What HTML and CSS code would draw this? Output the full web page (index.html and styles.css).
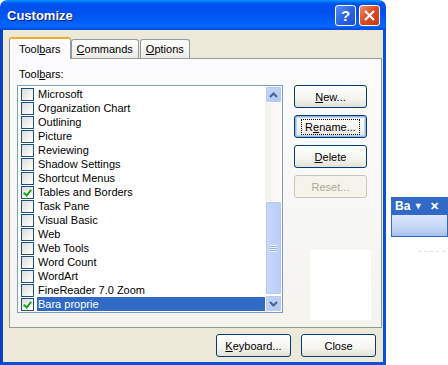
FILE: index.html
```html
<!DOCTYPE html>
<html lang="en">
<head>
    <meta charset="UTF-8">
    <link rel="stylesheet" href="styles.css">
    <title>Customize</title>
</head>
<body>

    <div class="window">
        <div class="titlebar">
            <span class="title">Customize</span>
            <span class="cap-btn help">?</span>
            <span class="cap-btn close">
                <svg width="13" height="13" viewBox="0 0 13 13"><path d="M2 2 L11 11 M11 2 L2 11" stroke="#fff" stroke-width="2.2"/></svg>
            </span>
        </div>

        <div class="client">
            <div class="tabs">
                <div class="tab active">Tool<u>b</u>ars</div>
                <div class="tab"><u>C</u>ommands</div>
                <div class="tab"><u>O</u>ptions</div>
            </div>

            <div class="panel">
                <div class="label">Tool<u>b</u>ars:</div>
                <div class="panel-row">
                    <div class="listbox">
                        <div class="items">
                            <div class="item"><span class="check"></span>Microsoft</div>
                            <div class="item"><span class="check"></span>Organization Chart</div>
                            <div class="item"><span class="check"></span>Outlining</div>
                            <div class="item"><span class="check"></span>Picture</div>
                            <div class="item"><span class="check"></span>Reviewing</div>
                            <div class="item"><span class="check"></span>Shadow Settings</div>
                            <div class="item"><span class="check"></span>Shortcut Menus</div>
                            <div class="item"><span class="check on"></span>Tables and Borders</div>
                            <div class="item"><span class="check"></span>Task Pane</div>
                            <div class="item"><span class="check"></span>Visual Basic</div>
                            <div class="item"><span class="check"></span>Web</div>
                            <div class="item"><span class="check"></span>Web Tools</div>
                            <div class="item"><span class="check"></span>Word Count</div>
                            <div class="item"><span class="check"></span>WordArt</div>
                            <div class="item"><span class="check"></span>FineReader 7.0 Zoom</div>
                            <div class="item selected"><span class="check on"></span><span class="sel-text">Bara proprie</span></div>
                        </div>
                        <div class="scrollbar">
                            <div class="sb-btn">
                                <svg width="9" height="6" viewBox="0 0 9 6"><path d="M1 5 L4.5 1.5 L8 5" fill="none" stroke="#4d6185" stroke-width="2"/></svg>
                            </div>
                            <div class="sb-track"></div>
                            <div class="sb-thumb"><span class="grip"></span></div>
                            <div class="sb-btn">
                                <svg width="9" height="6" viewBox="0 0 9 6"><path d="M1 1 L4.5 4.5 L8 1" fill="none" stroke="#4d6185" stroke-width="2"/></svg>
                            </div>
                        </div>
                    </div>

                    <div class="side-buttons">
                        <button><u>N</u>ew...</button>
                        <button class="default"><span class="focus">R<u>e</u>name...</span></button>
                        <button><u>D</u>elete</button>
                        <button disabled>Reset...</button>
                    </div>
                </div>
                <div class="artifact"></div>
            </div>

            <div class="footer">
                <button><u>K</u>eyboard...</button>
                <button>Close</button>
            </div>
        </div>
    </div>

    <!-- floating toolbar on the desktop -->
    <div class="float-bar">
        <div class="float-title">Ba <span class="arrow">&#9660;</span><span class="x">&#10005;</span></div>
        <div class="float-body"></div>
    </div>
    <div class="dashes"></div>

</body>
</html>
```

FILE: styles.css
```css
body {
    margin: 0;
    background-color: #fff;
    font-family: 'Liberation Sans', Arial, sans-serif;
    font-size: 11px;
    color: #000;
    width: 448px;
    height: 365px;
    overflow: hidden;
    position: relative;
}

u {
    text-decoration: underline;
    text-underline-offset: 1px;
}

.window {
    width: 386px;
    height: 365px;
    display: flex;
    flex-direction: column;
}

.titlebar {
    height: 30px;
    flex: none;
    display: flex;
    align-items: center;
    padding: 0 6px 0 7px;
    border-radius: 7px 7px 0 0;
    background: linear-gradient(to bottom, #0997ff 0%, #0053ee 12%, #0050ee 40%, #0066ff 88%, #0046d6 100%);
}

.title {
    flex: 1;
    color: #fff;
    font-weight: bold;
    font-size: 13px;
    text-shadow: 1px 1px 0 #0a1883;
}

.cap-btn {
    width: 19px;
    height: 19px;
    border: 1px solid #fff;
    border-radius: 3px;
    margin-left: 3px;
    display: flex;
    align-items: center;
    justify-content: center;
    color: #fff;
    font-weight: bold;
    font-size: 15px;
}

.help {
    background: linear-gradient(135deg, #5a8ff5 0%, #2b64e6 50%, #1d4fd0 100%);
}

.close {
    background: linear-gradient(135deg, #e88a6c 0%, #dc4a22 50%, #c53a14 100%);
}

.client {
    flex: 1;
    background-color: #ece9d8;
    border: 3px solid #0a52dc;
    border-top: none;
    border-left-color: #0841c8;
    padding: 7px 7px 0 6px;
    display: flex;
    flex-direction: column;
}

.tabs {
    display: flex;
    align-items: flex-end;
    height: 21px;
}

.tab {
    height: 18px;
    padding: 0 5px;
    line-height: 18px;
    border: 1px solid #919b9c;
    border-bottom: none;
    border-radius: 3px 3px 0 0;
    background: linear-gradient(to bottom, #fff, #ecebe6);
    margin-right: 1px;
}

.tab.active {
    height: 20px;
    line-height: 21px;
    padding: 0 9px;
    background: #fcfcfe;
    border-top: 2px solid #f2ab24;
    position: relative;
    top: 1px;
    z-index: 1;
    margin-right: 0;
}

.panel {
    height: 268px;
    width: 364px;
    border: 1px solid #919b9c;
    background: linear-gradient(to bottom, #fcfcfe, #f4f3ee);
    padding: 0 0 0 7px;
    box-sizing: content-box;
    position: relative;
}

.label {
    margin: 9px 0 3px 2px;
    height: 14px;
}

.panel-row {
    display: flex;
}

.listbox {
    width: 264px;
    height: 226px;
    border: 1px solid #7f9db9;
    background: #fff;
    display: flex;
}

.items {
    flex: 1;
    padding-top: 1px;
}

.item {
    height: 14px;
    line-height: 14px;
    display: flex;
    align-items: center;
    padding-left: 3px;
    white-space: nowrap;
}

.check {
    width: 11px;
    height: 11px;
    border: 1px solid #1c5180;
    background: linear-gradient(135deg, #dcdcd7, #fff);
    margin-right: 4px;
    flex: none;
    position: relative;
}

.check.on::after {
    content: "";
    position: absolute;
    left: 3px;
    top: 1px;
    width: 3px;
    height: 6px;
    border: solid #21a121;
    border-width: 0 2px 2px 0;
    transform: rotate(40deg);
}

.sel-text {
    background: #316ac5;
    color: #fff;
    flex: 1;
    height: 14px;
    padding-left: 1px;
    margin-left: -1px;
}

.scrollbar {
    width: 17px;
    display: flex;
    flex-direction: column;
    background: linear-gradient(to right, #f3f1ec, #fefefb);
}

.sb-btn {
    height: 15px;
    border: 1px solid #fff;
    background: linear-gradient(135deg, #c5d6fc, #b0c7f5);
    border-radius: 2px;
    display: flex;
    align-items: center;
    justify-content: center;
    box-shadow: inset 0 0 0 1px #b6c9f5;
}

.sb-track {
    flex: 1;
}

.sb-thumb {
    height: 92px;
    border: 1px solid #fff;
    border-radius: 2px;
    background: linear-gradient(to right, #c9d8fc, #b8cdf9);
    box-shadow: inset 0 0 0 1px #b4c8f6;
    display: flex;
    align-items: center;
    justify-content: center;
}

.grip {
    width: 7px;
    height: 7px;
    background: repeating-linear-gradient(to bottom, #eef4fe 0 1px, #8cb0f8 1px 2px);
}

.side-buttons {
    display: flex;
    flex-direction: column;
    gap: 7px;
    margin-left: 11px;
}

button {
    font-family: 'Liberation Sans', Arial, sans-serif;
    font-size: 11px;
    color: #000;
    width: 73px;
    height: 23px;
    border: 1px solid #003c74;
    border-radius: 3px;
    background: linear-gradient(to bottom, #fff 0%, #f5f4ef 60%, #e3e1d6 100%);
    padding: 0;
}

button.default {
    box-shadow: inset 0 0 0 1px #98b8ea, inset 0 0 0 2px #bcd4f6;
}

.focus {
    outline: 1px dotted #000;
    outline-offset: 1px;
    padding: 0 2px;
}

button:disabled {
    color: #aca899;
    border-color: #c9c7ba;
    background: #f5f4ea;
}

.artifact {
    position: absolute;
    left: 300px;
    top: 191px;
    width: 61px;
    height: 70px;
    background: #fff;
}

.footer {
    display: flex;
    justify-content: flex-end;
    gap: 10px;
    padding: 6px 0 0;
}

.footer button {
    width: 75px;
}

.float-bar {
    position: absolute;
    left: 391px;
    top: 197px;
    width: 55px;
    height: 38px;
    border: 1px solid #3169c6;
    display: flex;
    flex-direction: column;
}

.float-title {
    height: 17px;
    background: #3169c6;
    color: #fff;
    font-weight: bold;
    font-size: 12px;
    line-height: 17px;
    padding-left: 3px;
    white-space: nowrap;
}

.arrow {
    font-size: 9px;
    vertical-align: 1px;
}

.x {
    margin-left: 7px;
    font-size: 11px;
}

.float-body {
    flex: 1;
    background: linear-gradient(to bottom, #dbe6fb, #c4d6f7 60%, #a8c0ea);
}

.dashes {
    position: absolute;
    left: 418px;
    top: 251px;
    width: 30px;
    height: 1px;
    background: repeating-linear-gradient(to right, #e0e0e0 0 3px, transparent 3px 6px);
}
```
